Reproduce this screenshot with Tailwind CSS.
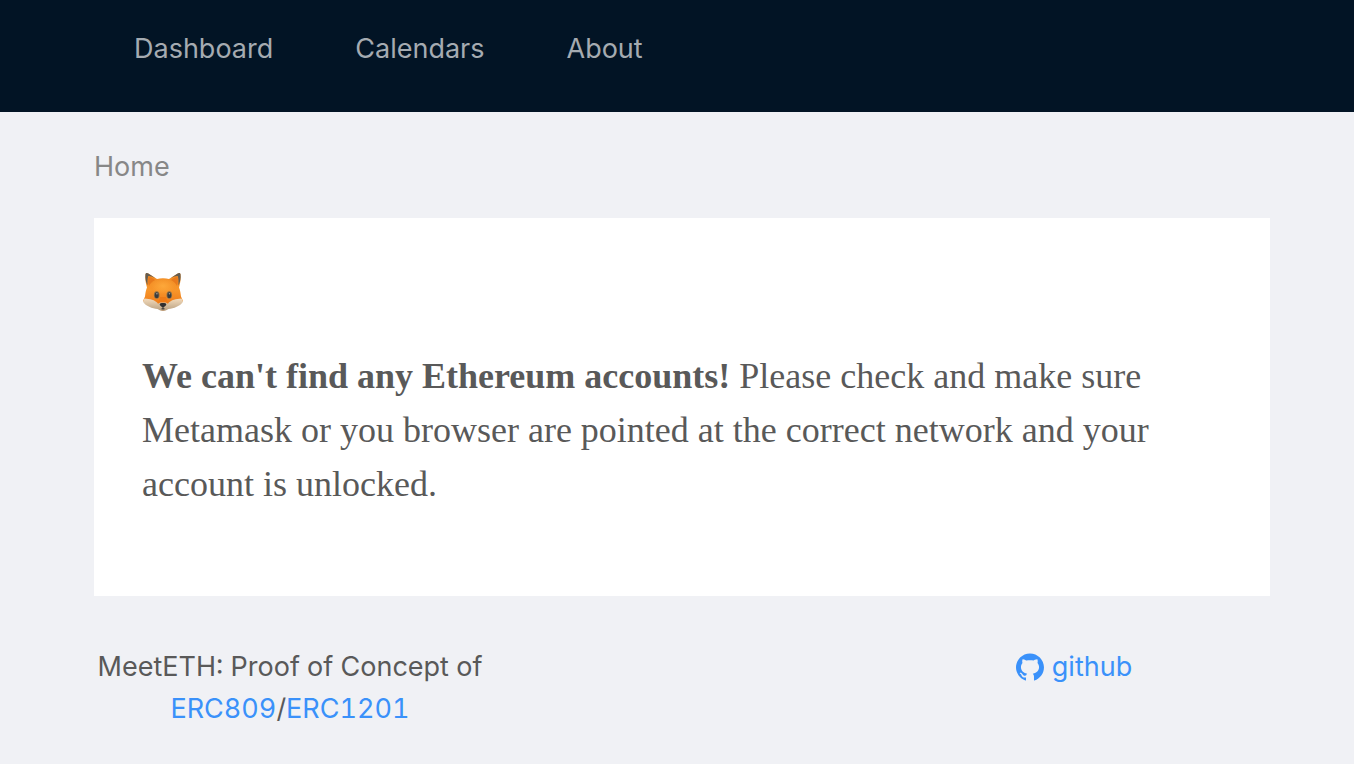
<!DOCTYPE html>
<html lang="en">
<head>
<meta charset="utf-8">
<meta name="viewport" content="width=device-width, initial-scale=1">
<title>MeetETH</title>
<script src="https://cdn.jsdelivr.net/npm/@tailwindcss/browser@4"></script>
</head>
<body class="min-h-screen bg-[#f0f1f5] font-['Inter','Liberation_Sans',sans-serif] text-[27px] leading-[42px] text-[#595959] tabular-nums antialiased">
<header class="bg-[#021425] pt-7 pb-[42px] pl-[94px] pr-[84px]">
  <nav class="flex gap-[2px] text-[#a5abb1]">
    <a href="#dashboard" class="px-10">Dashboard</a>
    <a href="#calendars" class="px-10">Calendars</a>
    <a href="#about" class="px-10">About</a>
  </nav>
</header>
<div class="pl-[94px] pr-[84px]">
  <nav aria-label="Breadcrumb" class="pt-[34px] pb-[30px] text-[#878787]"><span>Home</span></nav>
  <main class="bg-white px-12 pt-[47px] pb-[85px] font-['Liberation_Serif',serif] text-4xl leading-[54px]">
    <div class="flex h-[54px] items-center">
      <svg role="img" aria-label="Fox" class="h-10 w-[42px]" viewBox="0 0 42 40">
        <defs>
          <linearGradient id="fur" x1="0" y1="0" x2="0" y2="1">
            <stop offset="0" stop-color="#ef8a24"/><stop offset=".45" stop-color="#f8962a"/><stop offset="1" stop-color="#e96d12"/>
          </linearGradient>
          <linearGradient id="cheek" x1="0" y1="0" x2="0" y2="1">
            <stop offset="0" stop-color="#f3dcbd"/><stop offset="1" stop-color="#b99f7f"/>
          </linearGradient>
          <radialGradient id="brow"><stop offset="0" stop-color="#fda83a"/><stop offset="1" stop-color="#fda83a" stop-opacity="0"/></radialGradient>
        </defs>
        <path fill="url(#fur)" d="M3.5 2.3C3.8.8 5.2.9 6.3 1.6L15 7.1C18.5 6 23.5 6 27 7.1L35.7 1.6C36.8.9 38.2.8 38.5 2.3C39 7 38.3 11.5 37 15.5C38.3 18.5 38.6 21.5 39 24.5L41 29L27 36L21 39L15 36L1 29L3 24.5C3.4 21.5 3.7 18.5 5 15.5C3.7 11.5 3 7 3.5 2.3Z"/>
        <path fill="#625c52" d="M3.5 2.3C3.8.8 5.2.9 6.3 1.6L13.2 6C10.5 5 7.4 3.8 6.2 4.2C5.5 6.2 5.3 9.5 5.6 13.6C3.8 10 3 6 3.5 2.3ZM38.5 2.3C38.2.8 36.8.9 35.7 1.6L28.8 6C31.5 5 34.6 3.8 35.8 4.2C36.5 6.2 36.7 9.5 36.4 13.6C38.2 10 39 6 38.5 2.3Z"/>
        <path fill="#e87a1c" d="M6.5 5C9 5.2 11.5 6.5 13 8.1C10 9.7 8.2 11.7 7 14C6 11 5.8 7.7 6.5 5ZM35.5 5C33 5.2 30.5 6.5 29 8.1C32 9.7 33.8 11.7 35 14C36 11 36.2 7.7 35.5 5Z"/>
        <ellipse cx="21" cy="14" rx="12" ry="8" fill="url(#brow)"/>
        <path fill="url(#cheek)" d="M2.5 26.4C8 27 12.5 27.2 16.2 31.7C17.5 29.8 19 28.7 21 28.7S24.5 29.8 25.8 31.7C29.5 27.2 34 27 39.5 26.4C40 27.5 41.5 29.2 41 29.8C38.5 34.3 31.5 36.5 26.5 37C24.5 38.3 23 39 21 39S17.5 38.3 15.5 37C10.5 36.5 3.5 34.3 1 29.8C.5 29.2 2 27.5 2.5 26.4Z"/>
        <path fill="#ee7b17" d="M18.2 25H23.8L26.2 31.4L23.5 30.5H18.5L15.8 31.4Z"/>
        <ellipse cx="14.7" cy="23" rx="2.8" ry="3.8" fill="#8a7048"/><ellipse cx="27.3" cy="23" rx="2.8" ry="3.8" fill="#8a7048"/>
        <ellipse cx="14.7" cy="23.2" rx="1.9" ry="2.9" fill="#3a3b3d"/><ellipse cx="27.3" cy="23.2" rx="1.9" ry="2.9" fill="#3a3b3d"/>
        <circle cx="14.9" cy="21.7" r=".8" fill="#aaa69c"/><circle cx="27.5" cy="21.7" r=".8" fill="#aaa69c"/>
        <path fill="#302f30" d="M17.7 32.1C18 30.7 24 30.7 24.3 32.1C24.6 33.3 22.4 35 21.4 35.5V36.2L23.5 37L21 37.5L18.5 37L20.6 36.2V35.5C19.6 35 17.4 33.3 17.7 32.1Z"/>
      </svg>
    </div>
    <p class="mt-[30px]"><strong>We can't find any Ethereum accounts!</strong> Please check and make sure Metamask or you browser are pointed at the correct network and your account is unlocked.</p>
  </main>
  <footer class="grid grid-cols-3 pt-[50px] pb-7 text-center">
    <div>MeetETH: Proof of Concept of <a href="#erc809" class="text-[#3a91fa]">ERC809</a>/<a href="#erc1201" class="text-[#3a91fa]">ERC1201</a></div>
    <div class="col-start-3"><a href="#github" class="inline-flex items-center gap-2 text-[#3a91fa]">
      <svg aria-hidden="true" class="size-7" viewBox="64 64 896 896" fill="currentColor"><path d="M511.6 76.3C264.3 76.2 64 276.4 64 523.5 64 718.9 189.3 885 363.8 946c23.5 5.9 19.9-10.8 19.9-22.2v-77.5c-135.7 15.9-141.2-73.9-150.3-88.9C215 726 171.5 718 184.5 703c30.9-15.9 62.4 4 98.9 57.9 26.4 39.1 77.9 32.5 104 26 5.7-23.5 17.9-44.5 34.7-60.8-140.6-25.2-199.2-111-199.2-213 0-49.5 16.3-95 48.3-131.7-20.4-60.5 1.9-112.3 4.9-120 58.1-5.2 118.5 41.6 123.2 45.3 33-8.9 70.7-13.6 112.9-13.6 42.4 0 80.2 4.9 113.5 13.9 11.3-8.6 67.3-48.8 121.3-43.9 2.9 7.7 24.7 58.3 5.5 118 32.4 36.8 48.9 82.7 48.9 132.3 0 102.2-59 188.1-200 212.9a127.5 127.5 0 0 1 38.1 91v112.5c.8 9 0 17.9 15 17.9 177.1-59.7 304.6-227 304.6-424.1 0-247.2-200.4-447.3-447.5-447.3z"/></svg>github</a></div>
  </footer>
</div>
</body>
</html>
